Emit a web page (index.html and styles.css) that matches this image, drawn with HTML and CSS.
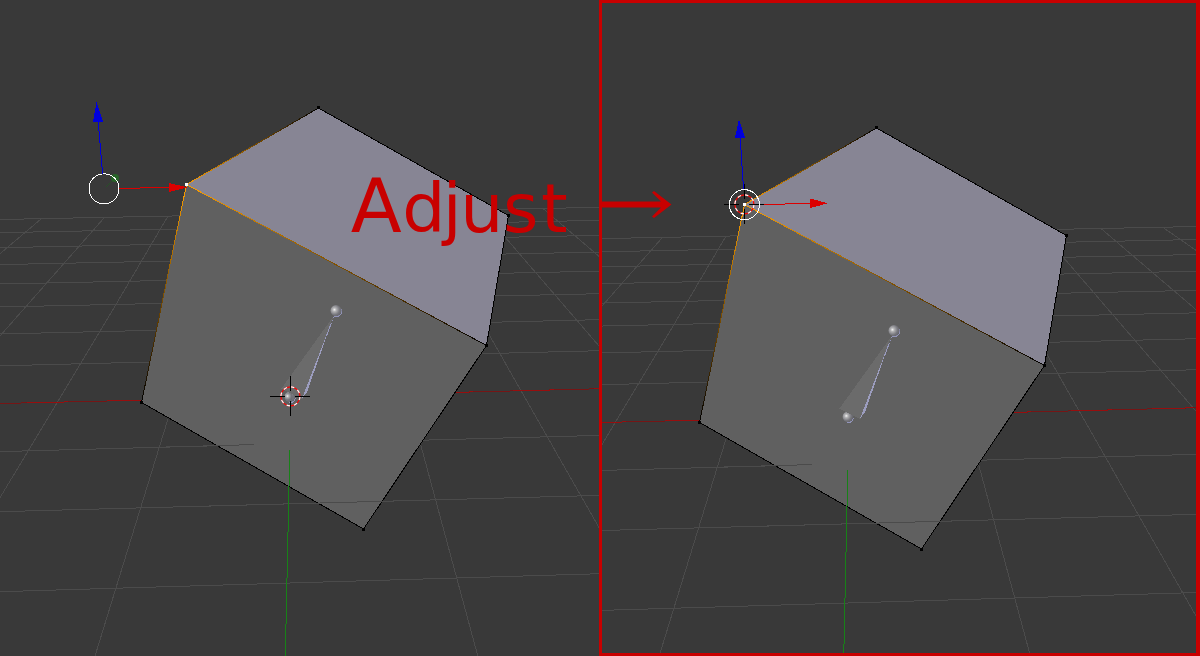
FILE: index.html
```
<!DOCTYPE html>
<html lang="en">
<head>
<meta charset="utf-8">
<title>Adjust</title>
<link rel="stylesheet" href="styles.css">
</head>
<body>
<main class="compare">
  <section class="view">
    <svg class="viewport" width="599" height="656" viewBox="0 0 599 656">
      <defs>
        <linearGradient id="edgeTop" gradientUnits="userSpaceOnUse" x1="187" y1="185" x2="319" y2="108"><stop offset="0" stop-color="#ffa000"/><stop offset="1" stop-color="#000"/></linearGradient>
        <linearGradient id="edgeMid" gradientUnits="userSpaceOnUse" x1="187" y1="185" x2="487" y2="346"><stop offset="0" stop-color="#ffa000"/><stop offset="1" stop-color="#000"/></linearGradient>
        <linearGradient id="edgeLeft" gradientUnits="userSpaceOnUse" x1="187" y1="185" x2="142" y2="403"><stop offset="0" stop-color="#ffa000"/><stop offset="1" stop-color="#000"/></linearGradient>
        <radialGradient id="ball" cx=".36" cy=".42" r=".65"><stop offset="0" stop-color="#f4f4f4"/><stop offset=".25" stop-color="#b4b4b6"/><stop offset=".7" stop-color="#77777d"/><stop offset="1" stop-color="#66666e"/></radialGradient>

        <g id="scene">
          <g class="grid">
            <path d="M0 219.5L640 206.5M0 232.7L640 219.5M0 247.7L640 234.5M0 264.6L640 251.2M0 284L640 270.3M0 307L640 292.8M0 334L640 318.7M0 365.8L640 349.7"/>
            <path d="M0 451.6L640 434.3M0 511.7L640 494.3M0 591.7L640 572.5"/>
            <path d="M41 219L0 253.7M104 218L0 336M168 216L112.7 310L0 497.7M168 419L95 656"/>
            <path d="M420.5 444L477.8 656M488.7 334L640 599.5M505 237L640 393.5M542.7 208.3L640 291.3M605 207.5L640 231.7"/>
          </g>
          <path class="axis-x" d="M0 403.5L142 400.2M455 392.4L640 387.7"/>
          <path class="axis-x-bright" d="M27 402.900L68 401.900M107 401L142 400.200M455 392.400L473 391.900M513 390.900L554 389.900M594 388.900L635 387.800"/>
          <path class="face-front" d="M186.500 184.500L486.500 345.500L363.500 529L141.500 402.500Z"/>
          <path class="face-top" d="M318.500 108L508.500 215.500L486.500 345.500L186.500 184.500Z"/>
          <path class="edge" d="M318.500 108L508.500 215.500L486.500 345.500L363.500 529L141.500 402.500"/>
          <path class="edge-lit" stroke="url(#edgeTop)" d="M186.500 184.500L318.500 108"/>
          <path class="edge-lit" stroke="url(#edgeMid)" d="M186.500 184.500L486.500 345.500"/>
          <path class="edge-lit" stroke="url(#edgeLeft)" d="M186.500 184.500L141.500 402.500"/>
          <path class="grid" d="M141 447.700L254 444.600M200 506.300L460 499.200"/>
          <path class="axis-y" d="M289.800 450L285.300 656"/>
          <g class="vertex">
            <rect x="317" y="106" width="3" height="3"/><rect x="507" y="214" width="3" height="3"/>
            <rect x="485" y="344" width="3" height="3"/><rect x="362" y="528" width="3" height="3"/><rect x="140" y="401" width="3" height="3"/>
          </g>
          <path class="ball-rim" d="M289 402.500A5.500 5.500 0 0 0 295.500 398"/>
          <circle cx="289.800" cy="396.700" r="5.200" fill="url(#ball)"/>
          <path class="bone" d="M333.300 316.500L281.300 388.700L302.500 399.500Z"/>
          <path class="bone-side" d="M333.500 316.500L302 398.500L307 392Z"/>
          <path class="bone-glint" d="M333.500 317L325 340"/>
          <path class="ball-rim" d="M341.500 309.500A5.500 5.500 0 0 1 333.500 315.800"/>
          <circle cx="336" cy="310.600" r="5.500" fill="url(#ball)"/>
        </g>

        <g id="cursor">
          <circle class="cursor-ring" r="9.500"/>
          <circle class="cursor-dash" r="9.500"/>
          <path class="cursor-cross" d="M-20.500 0H-5.500M4.500 0H19.500M0 -20V-5M0 5V20"/>
        </g>
      </defs>

      <use href="#scene"/>
      <circle cx="288.600" cy="396.700" r="4" fill="url(#ball)"/>
      <use href="#cursor" x="290.400" y="396.400"/>
      <path class="green-stem" d="M106 187L113 180"/>
      <circle class="green-tip" cx="115" cy="178" r="4"/>
      <circle class="ring" cx="104" cy="188.800" r="15"/>
      <path class="blue-line" d="M102.600 174L98.200 121"/>
      <path class="blue-tip" d="M96.500 102L93 121.500L103 122Z"/>
      <path class="red-line" d="M119 188.500L170 187.300"/>
      <path class="red-tip" d="M169 183L187.500 187.400L169.500 192Z"/>
      <rect class="selected" x="185" y="183" width="3" height="3"/>
    </svg>
  </section>

  <section class="view framed">
    <svg class="viewport" width="594" height="650" viewBox="44 -17 594 650">
      <use href="#scene"/>
      <g transform="translate(-558 -20)">
        <path class="blue-line" d="M743.500 189L740.200 137"/>
        <path class="blue-tip" d="M739 119L735 137.500L745 138Z"/>
        <path class="red-line" d="M764 204.500L811 203.400"/>
        <path class="red-tip" d="M810 198.500L828 203.300L810 208Z"/>
        <use href="#cursor" x="744.400" y="204.400"/>
        <circle class="ring" cx="744.400" cy="204.700" r="15"/>
        <rect class="selected" x="743" y="203" width="3" height="3"/>
      </g>
    </svg>
  </section>

  <svg class="annotation" width="1200" height="656" viewBox="0 0 1200 656">
    <text x="350.700 402.300 442.800 460.200 503 541" y="232"><tspan class="capital">A</tspan>djust</text>
    <path d="M601 201.500H661L652 192.500L654 191L671.500 204.500L654 218L652 216.500L661 207.500H601Z"/>
  </svg>
</main>
</body>
</html>
```
FILE: styles.css
```
body {
  margin: 0;
  background: #393939;
}

.compare {
  position: relative;
  display: flex;
  width: 1200px;
  height: 656px;
  overflow: hidden;
}

.view {
  flex: 0 0 599px;
  height: 656px;
  overflow: hidden;
}

.framed {
  box-sizing: border-box;
  flex-basis: 601px;
  border: 3px solid #c80000;
  border-right-width: 4px;
}

.viewport {
  display: block;
}

.viewport path,
.viewport rect,
.ring {
  shape-rendering: crispEdges;
}

.grid {
  fill: none;
  stroke: #4b4b4b;
}

.axis-x,
.axis-x-bright {
  fill: none;
  stroke: #761515;
}

.axis-x-bright {
  stroke: #980e0e;
}

.axis-y {
  fill: none;
  stroke: #178217;
}

.face-front { fill: #606060; }
.face-top { fill: #878594; }

.edge,
.edge-lit {
  fill: none;
}

.edge { stroke: #000; }
.vertex { fill: #000; }
.selected { fill: #fff; }

.bone { fill: #6b6b6b; }
.bone-side { fill: #9c9dbf; }

.bone-glint,
.ball-rim {
  fill: none;
  stroke: #9395ba;
}

.bone-glint {
  stroke-dasharray: 1.500 1.500;
}

.cursor-ring,
.cursor-dash {
  fill: none;
  stroke: #f00;
  stroke-width: 1.2;
}

.cursor-dash {
  stroke: #fff;
  stroke-dasharray: 3.730 3.730;
}

.cursor-cross {
  stroke: #000;
}

.ring {
  fill: none;
  stroke: #fff;
}

.green-stem { stroke: #285028; }
.green-tip { fill: #286428; }
.blue-line { stroke: #0000dc; }
.blue-tip { fill: #0000dc; }
.red-line { stroke: #dc0000; }
.red-tip { fill: #dc0000; }

.annotation {
  position: absolute;
  inset: 0;
  fill: #c80000;
  font: 68px "DejaVu Sans", sans-serif;
}

.capital {
  font-size: 74.5px;
}
```
